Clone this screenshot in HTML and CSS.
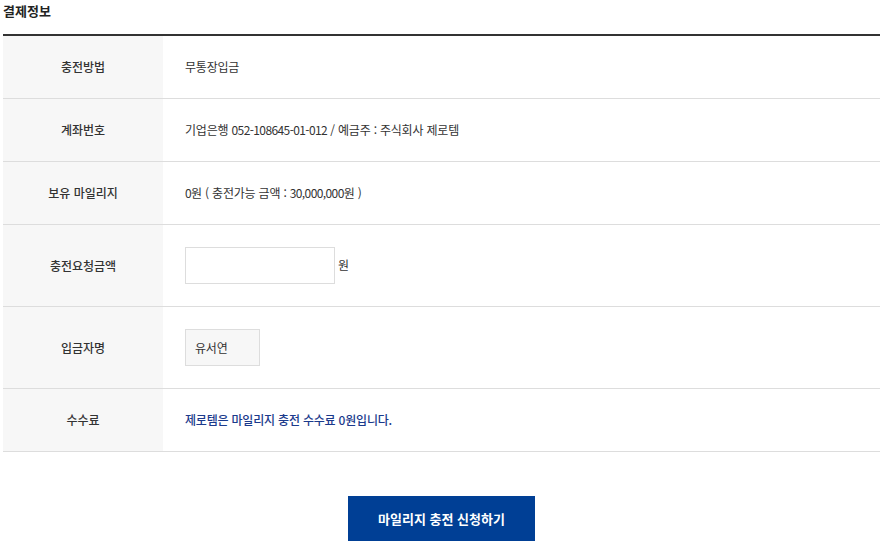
FILE: index.html
```html
<!DOCTYPE html>
<html lang="ko">
<head>
<meta charset="utf-8">
<link rel="stylesheet" href="styles.css">
</head>
<body>
<div class="wrap">
  <h3 class="title">결제정보</h3>
  <table class="pay">
    <tr><th>충전방법</th><td>무통장입금</td></tr>
    <tr><th>계좌번호</th><td>기업은행 <span class="num">052-108645-01-012</span> / 예금주 : 주식회사 제로템</td></tr>
    <tr><th>보유 마일리지</th><td><span class="num">0</span>원 ( 충전가능 금액 : <span class="num">30,000,000</span>원 )</td></tr>
    <tr><th>충전요청금액</th><td><div class="inrow"><input class="amt" type="text"><span class="unit">원</span></div></td></tr>
    <tr><th>입금자명</th><td><div class="namebox">유서연</div></td></tr>
    <tr><th>수수료</th><td class="blue">제로템은 마일리지 충전 수수료 0원입니다.</td></tr>
  </table>
  <div class="btns"><button class="submit" type="button">마일리지 충전 신청하기</button></div>
</div>
</body>
</html>
```
FILE: styles.css
```css
* { box-sizing: border-box; }
body {
  margin: 0;
  font-family: "Noto Sans CJK KR", "Noto Sans", sans-serif;
  color: #333;
  background: #fff;
}
.wrap { padding: 0 9px 0 3px; }
.title {
  margin: 0;
  height: 34px;
  padding-top: 2px;
  font-size: 13px;
  font-weight: 700;
  line-height: 18px;
  color: #222;
}
.pay {
  width: 100%;
  border-collapse: collapse;
  border-top: 2px solid #333;
  font-size: 12px;
}
.pay th, .pay td {
  border-bottom: 1px solid #ddd;
  padding: 22px 0;
  line-height: 18px;
  height: 63px;
  vertical-align: middle;
}
.pay th {
  width: 160px;
  background: #f7f7f7;
  font-weight: 500;
  text-align: center;
  color: #333;
}
.pay td {
  padding-left: 22px;
  text-align: left;
  font-weight: 400;
  letter-spacing: -0.2px;
}
.num { letter-spacing: -0.6px; }
.inrow { display: flex; align-items: center; gap: 3px; }
.amt {
  width: 150px;
  height: 37px;
  border: 1px solid #ddd;
  margin: 0;
  padding: 0 8px;
  font: inherit;
}
.unit { position: relative; top: -1px; }
.namebox {
  width: 75px;
  height: 37px;
  border: 1px solid #ddd;
  background: #f7f7f7;
  padding-left: 9px;
  display: flex;
  align-items: center;
}
.blue { color: #1b3a8c; font-weight: 500 !important; }
.btns { display: flex; justify-content: center; padding-top: 44px; }
.submit {
  width: 187px;
  height: 45px;
  border: 0;
  background: #003f95;
  color: #fff;
  font-family: inherit;
  font-size: 13px;
  font-weight: 700;
}
```
